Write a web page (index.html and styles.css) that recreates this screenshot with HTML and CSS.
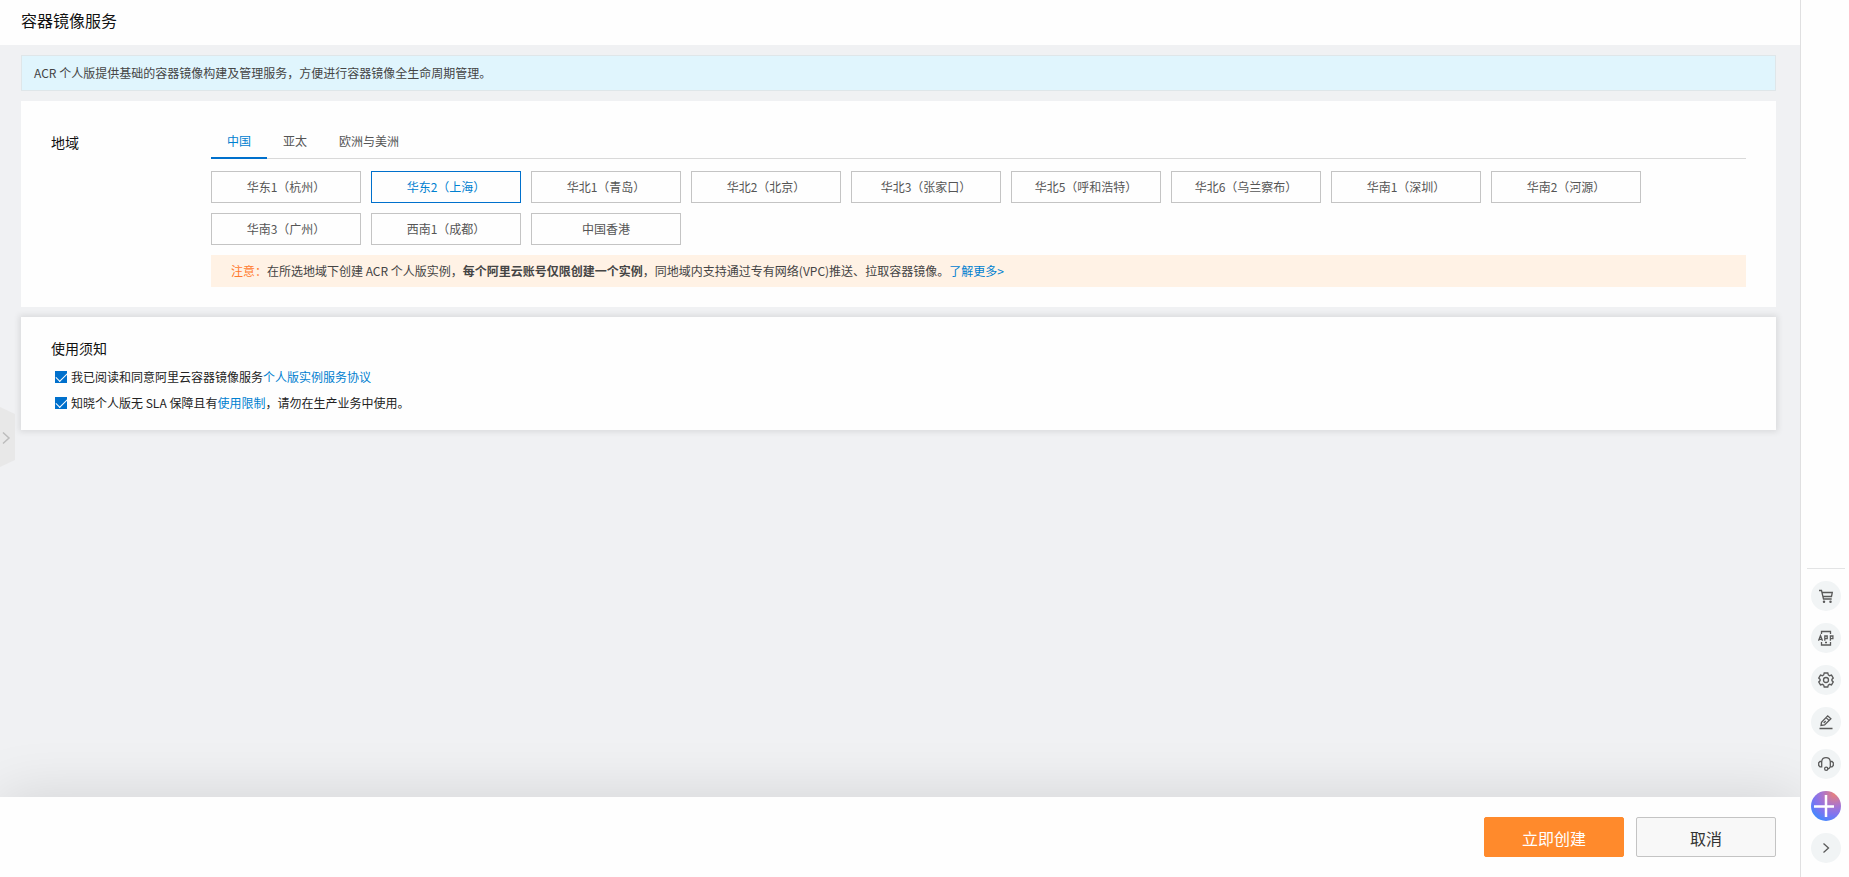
FILE: index.html
```
<!DOCTYPE html>
<html lang="zh-CN">
<head>
<meta charset="utf-8">
<title>容器镜像服务</title>
<link rel="stylesheet" href="styles.css">
</head>
<body>
<div class="page">
  <div class="main">
    <header class="header"><h1 class="title">容器镜像服务</h1></header>
    <main class="content">
      <div class="alert">ACR 个人版提供基础的容器镜像构建及管理服务，方便进行容器镜像全生命周期管理。</div>
      <section class="card region">
        <h2 class="label">地域</h2>
        <div class="region-body">
          <div class="tabs" role="tablist">
            <button class="tab active" role="tab" aria-selected="true">中国</button>
            <button class="tab" role="tab">亚太</button>
            <button class="tab" role="tab">欧洲与美洲</button>
          </div>
          <div class="options">
            <button class="option">华东1（杭州）</button>
            <button class="option selected">华东2（上海）</button>
            <button class="option">华北1（青岛）</button>
            <button class="option">华北2（北京）</button>
            <button class="option">华北3（张家口）</button>
            <button class="option">华北5（呼和浩特）</button>
            <button class="option">华北6（乌兰察布）</button>
            <button class="option">华南1（深圳）</button>
            <button class="option">华南2（河源）</button>
            <button class="option">华南3（广州）</button>
            <button class="option">西南1（成都）</button>
            <button class="option">中国香港</button>
          </div>
          <p class="notice"><span class="warn">注意：</span>在所选地域下创建 ACR 个人版实例，<b>每个阿里云账号仅限创建一个实例</b>，同地域内支持通过专有网络(VPC)推送、拉取容器镜像。<a class="link" href="#">了解更多&gt;</a></p>
        </div>
      </section>
      <section class="card terms">
        <h2 class="label">使用须知</h2>
        <div class="term"><input class="check" type="checkbox" id="t1" checked><label for="t1">我已阅读和同意阿里云容器镜像服务<a class="link" href="#">个人版实例服务协议</a></label></div>
        <div class="term"><input class="check" type="checkbox" id="t2" checked><label for="t2">知晓个人版无 SLA 保障且有<a class="link" href="#">使用限制</a>，请勿在生产业务中使用。</label></div>
      </section>
    </main>
    <footer class="footer">
      <button class="btn primary">立即创建</button>
      <button class="btn">取消</button>
    </footer>
    <button class="handle" aria-label="展开菜单">
      <svg width="15" height="60" viewBox="0 0 15 60"><path d="M0 0L15 7V53L0 60Z" fill="#e8e8e8"/><path d="M3 25.500l6 5.500-6 5.500" fill="none" stroke="#bcbcbc" stroke-width="1.500"/></svg>
    </button>
  </div>
  <aside class="sidebar">
    <div class="divider"></div>
    <button class="tool" aria-label="购物车"><svg viewBox="0 0 16 16"><path d="M1 2.500h2.500l2 8.500h8.200M3.900 4.500h10.400l-.8 4H4.900"/><circle cx="6" cy="13.700" r=".6"/><circle cx="12.500" cy="13.700" r=".6"/></svg></button>
    <button class="tool" aria-label="APP"><svg viewBox="0 0 16 16"><path d="M3.500 4V1.500h9V4M3.500 12v3h9v-3M7 12.500h2M.5 10.800l2-5.200 2 5.200M1.200 9.300h2.600M6.800 10.800V6h2.400v2.700H6.800M12.400 10.800V6h2.500v2.700h-2.500"/></svg></button>
    <button class="tool" aria-label="设置"><svg viewBox="0 0 16 16"><path d="M6.200 1h3.600l.5 1.900 1.300.8 1.900-.6 1.800 3-1.400 1.300v1.200l1.400 1.300-1.800 3-1.900-.6-1.300.8-.5 1.900H6.200l-.5-1.900-1.300-.8-1.900.6-1.800-3 1.400-1.300V7.400L.7 6.100l1.800-3 1.900.6 1.300-.8z"/><circle cx="8" cy="8" r="2.500"/></svg></button>
    <button class="tool" aria-label="反馈"><svg viewBox="0 0 16 16"><path d="M1.500 14.500h13M3 11.500l.5-3.200 6.200-6.500 3.200 3L6.600 11zM8 3.600l3.200 3M5.700 9l2-2"/></svg></button>
    <button class="tool" aria-label="客服"><svg viewBox="0 0 16 16"><path d="M3.700 5.500v5.300H2L.7 9.500V6.800L2 5.500h1.700C4 3 5.700 1.700 8 1.700S12 3 12.300 5.500H14l1.300 1.300v2.700L14 10.800h-1.700V5.500M12.300 10.800c-.5 1.400-1.300 2-2.700 2.200"/><circle cx="8.200" cy="12.800" r="1.600"/></svg></button>
    <button class="tool add" aria-label="添加"><svg class="plus" viewBox="0 0 30 30"><path d="M3 15.500h20M15 4v22"/></svg></button>
    <button class="tool" aria-label="收起"><svg viewBox="0 0 16 16"><path d="M5.500 3.500L10.500 8l-5 4.500"/></svg></button>
  </aside>
</div>
</body>
</html>
```
FILE: styles.css
```
* { box-sizing: border-box; }
body {
  margin: 0;
  font: 12px/18px "Noto Sans CJK SC", sans-serif;
  color: #333;
}
button { font: inherit; padding: 0; cursor: pointer; }
.page { display: flex; min-height: 100vh; background: #fefefe; }
.main {
  position: relative;
  flex: 1;
  display: flex;
  flex-direction: column;
  background: #f0f1f3;
}
.header { height: 45px; padding: 8px 21px; background: #fefefe; }
.title { margin: 0; font-size: 16px; line-height: 24px; font-weight: 400; color: #111; }
.content {
  flex: 1;
  display: flex;
  flex-direction: column;
  gap: 10px;
  padding: 10px 24px 10px 21px;
}
.alert {
  padding: 8px 12px;
  border: 1px solid #dfe6e9;
  background: #e0f5fd;
  color: #444;
}
.card { padding: 20px 30px; background: #fefefe; }
.label { margin: 0; font-size: 14px; line-height: 24px; font-weight: 400; color: #111; }
.region { display: flex; padding-top: 24px; }
.region .label { width: 160px; padding-top: 5px; }
.region-body { flex: 1; }
.tabs { display: flex; height: 34px; border-bottom: 1px solid #d9d9d9; }
.tab {
  height: 34px;
  padding: 0 16px;
  border: 0;
  border-bottom: 2px solid transparent;
  background: none;
  color: #555;
}
.tab.active { border-color: #0070cc; color: #0080d0; }
.options { display: flex; flex-wrap: wrap; gap: 10px; padding: 12px 0 10px; }
.option {
  width: 150px;
  height: 32px;
  border: 1px solid #c4c4c4;
  background: #fefefe;
  color: #555;
}
.option.selected { border-color: #0070cc; color: #0080d0; }
.notice { margin: 0; padding: 7px 20px; background: #fff2e5; color: #444; }
.notice b { font-weight: 700; }
.warn { color: #ff7a2e; }
.link { color: #0080d0; text-decoration: none; }
.terms {
  padding: 19px 30px 14px;
  color: #222;
  box-shadow: 0 0 6px 2px rgba(0, 0, 0, 0.09);
}
.terms .label { margin-bottom: 4px; }
.term { display: flex; align-items: center; gap: 4px; height: 26px; padding-left: 4px; }
.check {
  appearance: none;
  width: 12px;
  height: 12px;
  margin: 0;
  background: #0070cc;
  position: relative;
}
.check::after {
  content: "";
  position: absolute;
  left: 1px;
  top: 2px;
  width: 10px;
  height: 5px;
  border: solid #fff;
  border-width: 0 0 1px 1px;
  transform: rotate(-45deg);
}
.footer {
  display: flex;
  justify-content: flex-end;
  gap: 12px;
  height: 80px;
  padding: 20px 24px;
  background: #fefefe;
  box-shadow: 0 0 60px rgba(0, 0, 0, 0.13);
  clip-path: inset(-80px 0 0 0);
}
.btn {
  width: 140px;
  height: 40px;
  padding-top: 1px;
  border: 1px solid #c4c4c4;
  border-radius: 2px;
  background: #f8f8f8;
  font-size: 16px;
  color: #333;
}
.btn.primary { border-color: #ff8a2c; background: #ff8a2c; color: #fff; }
.handle {
  position: absolute;
  left: 0;
  top: 407px;
  width: 15px;
  height: 60px;
  border: 0;
  background: none;
}
.handle svg { display: block; }
.sidebar {
  width: 49px;
  display: flex;
  flex-direction: column;
  justify-content: flex-end;
  gap: 12px;
  padding: 0 8px 14px 10px;
  border-left: 1px solid #e0e0e1;
  background: #fefefe;
}
.divider { height: 1px; margin: 0 -4px; background: #e3e4e5; }
.tool {
  display: flex;
  align-items: center;
  justify-content: center;
  width: 30px;
  height: 30px;
  border: 0;
  border-radius: 50%;
  background: #f1f4f5;
}
.tool svg { width: 16px; height: 16px; fill: none; stroke: #5a5a5a; stroke-width: 1.3; }
.tool.add { background: radial-gradient(circle at 78% 10%, #e8807c 0, #a874d0 35%, #7f74f0 58%, #3d8bff 85%, #2e6cff 100%); }
.tool .plus { width: 30px; height: 30px; stroke: #fff; stroke-width: 2.5; }
```
